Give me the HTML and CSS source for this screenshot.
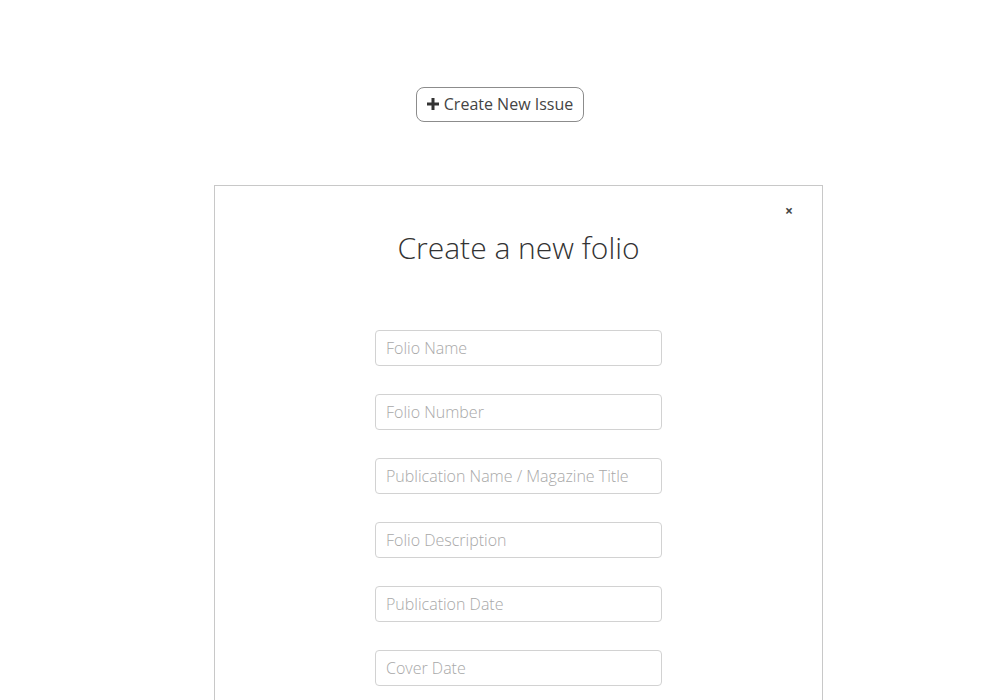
FILE: index.html
```html
<!DOCTYPE html>
<html>
<head>
<meta charset="utf-8">
<link rel="stylesheet" href="styles.css">
</head>
<body>
<div class="page">
  <div class="top">
    <button class="create-btn" type="button"><svg class="plus" viewBox="0 0 12 12" width="12" height="12"><path d="M4.5 0h3v4.5H12v3H7.5V12h-3V7.5H0v-3h4.5z" fill="#333"/></svg>Create New Issue</button>
  </div>
  <div class="modal">
    <button class="close" type="button">×</button>
    <h1 class="title">Create a new folio</h1>
    <form class="form">
      <input class="field" type="text" placeholder="Folio Name">
      <input class="field" type="text" placeholder="Folio Number">
      <input class="field" type="text" placeholder="Publication Name / Magazine Title">
      <input class="field" type="text" placeholder="Folio Description">
      <input class="field" type="text" placeholder="Publication Date">
      <input class="field" type="text" placeholder="Cover Date">
    </form>
  </div>
</div>
</body>
</html>
```

FILE: styles.css
```css
html, body {
  margin: 0;
  padding: 0;
  background: #fff;
  font-family: "Open Sans", "Liberation Sans", sans-serif;
  color: #333;
}
.page {
  display: flex;
  flex-direction: column;
  align-items: center;
  overflow: hidden;
  height: 700px;
}
.top {
  flex-shrink: 0;
  padding-top: 87px;
  height: 185px;
  box-sizing: border-box;
}
.create-btn {
  display: flex;
  align-items: center;
  gap: 5px;
  height: 35px;
  padding: 0 10px 1px 10px;
  border: 1px solid #8c8c8c;
  border-radius: 8px;
  background: #fff;
  font-family: "Open Sans", "Liberation Sans", sans-serif;
  font-size: 16px;
  color: #444;
  cursor: pointer;
}
.plus {
  display: block;
  margin-top: 0;
}
.modal {
  flex-shrink: 0;
  position: relative;
  width: 609px;
  box-sizing: border-box;
  border: 1px solid #c8c8c8;
  border-bottom: none;
  height: 600px;
  padding-top: 41px;
  margin-left: 37px;
}
.close {
  position: absolute;
  top: 17px;
  right: 29px;
  border: none;
  background: none;
  padding: 0;
  font-family: "Open Sans", "Liberation Sans", sans-serif;
  font-size: 14px;
  font-weight: 700;
  color: #444;
  line-height: 16px;
}
.title {
  margin: 0;
  text-align: center;
  font-weight: 300;
  font-size: 30px;
  line-height: 42px;
  color: #333;
}
.form {
  display: flex;
  flex-direction: column;
  align-items: center;
  gap: 28px;
  margin-top: 61px;
}
.field {
  width: 287px;
  height: 36px;
  box-sizing: border-box;
  border: 1px solid #d2d2d2;
  border-radius: 4px;
  padding: 0 10px;
  font-family: "Open Sans", "Liberation Sans", sans-serif;
  font-size: 16px;
  font-weight: 300;
  color: #333;
  background: #fff;
}
.field::placeholder {
  color: #a8a8a8;
  font-weight: 300;
}
```
